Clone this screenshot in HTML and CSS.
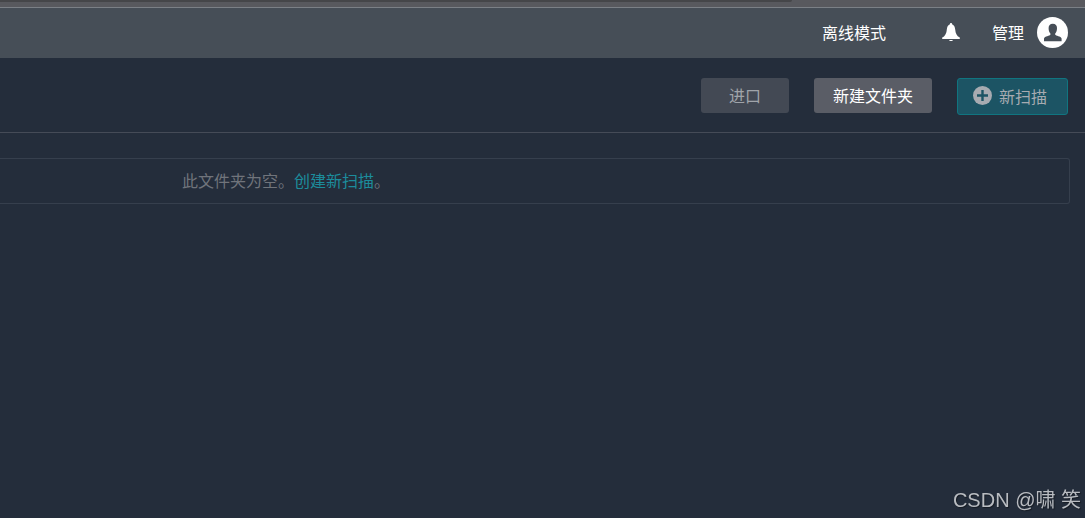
FILE: index.html
```
<!DOCTYPE html>
<html lang="zh-CN">
<head>
    <meta charset="UTF-8">
    <meta name="viewport" content="width=device-width, initial-scale=1.0">
    <title>我的扫描</title>
    <link rel="stylesheet" href="styles.css">
</head>
<body>
    <div class="window-strip"><div class="window-tab"></div></div>

    <header class="topbar">
        <a class="mode" href="#">离线模式</a>
        <button class="bell" type="button" aria-label="通知">
            <svg width="18" height="20" viewBox="0 0 18 20" fill="#fff">
                <path d="M9 1C9.8 1 10.2 1.5 10.3 2.6C12.2 3.3 12.9 5 13.2 7.5C13.6 11.5 14.6 13.8 17.8 15.6V17H0.2V15.6C3.4 13.8 4.4 11.5 4.8 7.5C5.1 5 5.8 3.3 7.7 2.6C7.8 1.5 8.2 1 9 1Z"/>
                <path d="M7 18H11C10.7 18.8 10 19.1 9 19.1C8 19.1 7.3 18.8 7 18Z"/>
            </svg>
        </button>
        <a class="user" href="#">
            <span>管理</span>
            <svg width="31" height="31" viewBox="0 0 31 31">
                <circle cx="15.5" cy="15.5" r="15.5" fill="#fff"/>
                <path d="M15.8 6.8C18.6 6.8 20 8.4 20 11C20 13.6 19.4 15.2 18.2 16.4V17.8C18.6 18.8 24 19.4 24.6 21.4V24.2H7V21.4C7.6 19.4 13 18.8 13.4 17.8V16.4C12.2 15.2 11.6 13.6 11.6 11C11.6 8.4 13 6.8 15.8 6.8Z" fill="#464e57"/>
            </svg>
        </a>
    </header>

    <div class="actions">
        <button class="btn btn-import" type="button">进口</button>
        <button class="btn btn-folder" type="button">新建文件夹</button>
        <button class="btn btn-scan" type="button">
            <svg width="19" height="19" viewBox="0 0 19 19">
                <circle cx="9.5" cy="9.5" r="9.5" fill="#a7abb1"/>
                <path d="M9.5 4V15M4 9.5H15" stroke="#1c5464" stroke-width="2.4"/>
            </svg>
            <span>新扫描</span>
        </button>
    </div>

    <main class="content">
        <p class="empty">此文件夹为空。<a href="#">创建新扫描</a>。</p>
    </main>

    <div class="watermark">CSDN @啸 笑</div>
</body>
</html>
```

FILE: styles.css
```
:root {
    --bg: #242d3b;
    --bar: #464e57;
    --line: #454b57;
    --teal: #1c8c9c;
}

* {
    margin: 0;
    padding: 0;
    box-sizing: border-box;
}

body {
    font-family: "Noto Sans CJK SC", sans-serif;
    font-size: 16px;
    line-height: 24px;
    background: var(--bg);
    min-height: 100vh;
}

a {
    color: inherit;
    text-decoration: none;
}

button {
    border: none;
    font: inherit;
    cursor: pointer;
}

svg {
    display: block;
}

.window-strip {
    height: 8px;
    background: #58595e;
    border-bottom: 1px solid #7b8086;
}

.window-tab {
    width: 73%;
    height: 2px;
    background: #454649;
    border-bottom-right-radius: 8px;
}

.topbar {
    display: flex;
    justify-content: flex-end;
    align-items: center;
    height: 50px;
    padding: 0 17px 2px 0;
    background: var(--bar);
    color: #fff;
}

.bell {
    margin: 0 32px 0 56px;
    background: none;
}

.user {
    display: flex;
    align-items: center;
    gap: 13px;
}

.actions {
    display: flex;
    justify-content: flex-end;
    align-items: flex-start;
    gap: 25px;
    padding: 20px 17px 17px;
    border-bottom: 1px solid var(--line);
}

.btn {
    height: 35px;
    padding: 0 19px 2px;
    border-radius: 3px;
    color: #fff;
}

.btn-import {
    padding: 0 28px 2px;
    background: #434954;
    color: #a0a4aa;
}

.btn-folder {
    background: #5a5d66;
}

.btn-scan {
    display: flex;
    align-items: center;
    gap: 7px;
    height: 37px;
    padding: 0 20px 2px 15px;
    border: 1px solid #107580;
    background: #1c5464;
    color: #a7abb1;
}

.content {
    padding: 25px 15px 0 0;
}

.empty {
    padding: 9px 16px 11px 182px;
    border: 1px solid #363f4d;
    border-left: none;
    border-radius: 0 3px 3px 0;
    color: #70747b;
}

.empty a {
    color: var(--teal);
}

.watermark {
    position: fixed;
    right: 4px;
    bottom: 4px;
    font-family: "Liberation Sans", "Noto Sans CJK SC", sans-serif;
    font-size: 20px;
    line-height: 28px;
    color: #b9bcc1;
    text-shadow: 1px 1px 1px rgba(0, 0, 0, 0.4);
}
```
